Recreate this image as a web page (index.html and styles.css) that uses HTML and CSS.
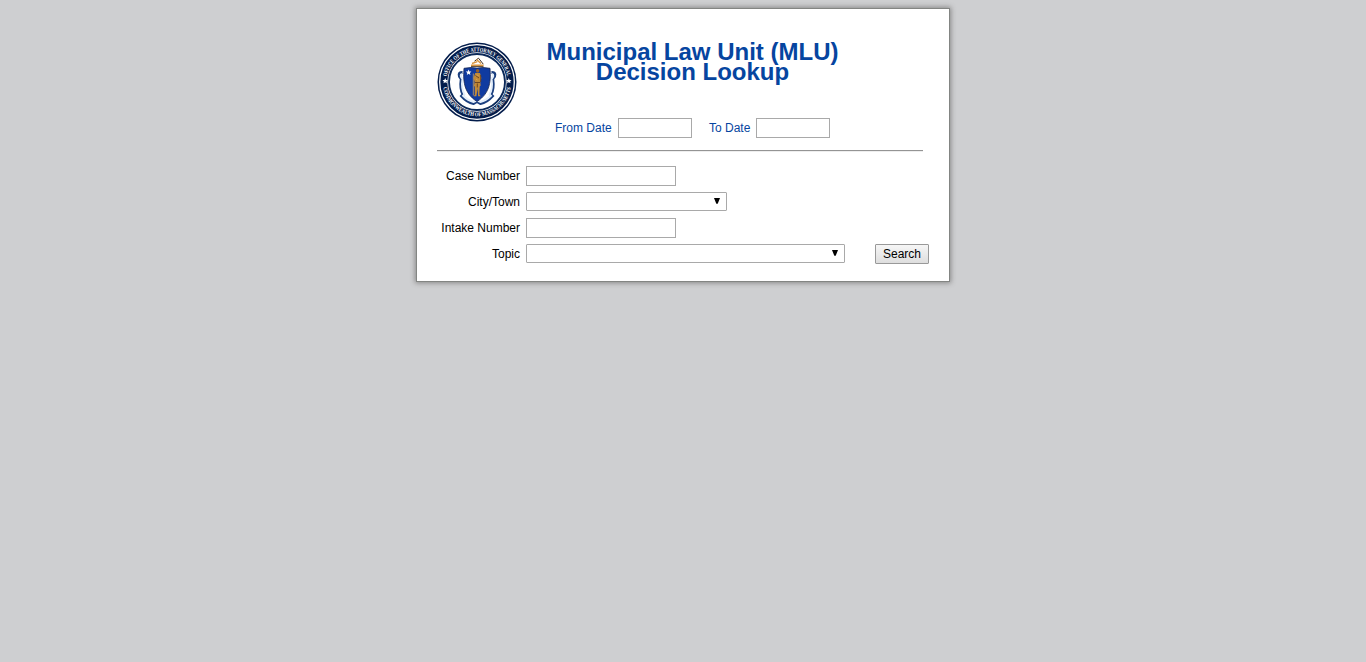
FILE: index.html
```html
<!DOCTYPE html>
<html lang="en">
<head>
<meta charset="utf-8">
<title>Municipal Law Unit Decision Lookup</title>
<link rel="stylesheet" href="styles.css">
</head>
<body>
<main class="card">
  <header class="header">
    <svg class="seal" viewBox="0 0 80 80" role="img" aria-label="Office of the Attorney General seal">
      <defs>
        <path id="arcTop" d="M9.400 40a30.600 30.600 0 0 1 61.200 0"/>
        <path id="arcBottom" d="M5.800 40a34.200 34.200 0 0 0 68.400 0"/>
      </defs>
      <circle cx="40" cy="40" r="39.500" fill="#031c4b"/>
      <circle cx="40" cy="40" r="37.300" fill="none" stroke="#fff" stroke-width="1.300"/>
      <circle cx="40" cy="40" r="29.700" fill="#fff"/>
      <circle cx="40" cy="40" r="28" fill="#fff" stroke="#0b2959" stroke-width="1.900"/>
      <text class="seal-text"><textPath href="#arcTop" startOffset="50%" textLength="85" lengthAdjust="spacingAndGlyphs">OFFICE OF THE ATTORNEY GENERAL</textPath></text>
      <text class="seal-text"><textPath href="#arcBottom" startOffset="50%" textLength="96" lengthAdjust="spacingAndGlyphs">COMMONWEALTH OF MASSACHUSETTS</textPath></text>
      <path fill="#fff" d="M8.200 36.100l.8 1.800 1.900.2-1.400 1.300.4 1.900-1.700-1-1.700 1 .4-1.900-1.400-1.300 1.900-.2zM71.800 36.100l.8 1.800 1.900.2-1.400 1.300.4 1.900-1.700-1-1.700 1 .4-1.900-1.400-1.300 1.900-.2z"/>
      <path d="M34 24.300h12.500M37.500 19.200l4-3 4.800 6" fill="none" stroke="#3d2a18" stroke-width="1"/>
      <path d="M34 23.200h12.500M35 21.500l5.300-1.800M39.500 17.500l4.500 4" fill="none" stroke="#d9953f" stroke-width="1.400"/>
      <path d="M25.500 30.500c-4-.2-4.500 3.200-1.200 6.500-.9 6-.8 11 1.800 15.500l-1.500 1.500c3.500 4 7.500 6.700 12 7.500l3.400-2 3.400 2c4.500-.8 8.500-3.500 12-7.500l-1.500-1.500c2.600-4.500 2.700-9.500 1.800-15.500 3.300-3.300 2.800-6.700-1.200-6.500" fill="none" stroke="#1b3f7f" stroke-width="3"/>
      <path d="M25 32c-2 .5-1.500 3 .4 5-.8 6-.6 11 2 15.300l-1.300 1.500c3.500 3.500 6.500 5.300 10.500 6.200l3.400-1.700 3.400 1.700c4-.9 7-2.700 10.500-6.200l-1.300-1.500c2.600-4.300 2.800-9.300 2-15.300 1.900-2 2.400-4.500.4-5" fill="none" stroke="#e3eefb" stroke-width="2"/>
      <path d="M27 26.300l7-.8 6 .6 6-.6 7 .8c.8 11 1 24.500-13 33.200C26 50.800 26.200 37.300 27 26.300z" fill="#103ba0" stroke="#122352" stroke-width=".8"/>
      <path d="M31.600 27.600l.8 1.800 2 .2-1.500 1.300.5 2-1.800-1.100-1.800 1.100.5-2-1.500-1.300 2-.2z" fill="#fff"/>
      <ellipse cx="40.600" cy="28.800" rx="1.700" ry="1.900" fill="#986027"/>
      <path d="M38.200 31h4.800l1.300 5-1 4.500.4 3-1 1-.3 8.300 1.500 1.500h-2.800l-.5-8-1.200 8h-2.700l1.100-1.500-.1-8-.8-1 .7-3.700-1-4z" fill="#c28a38"/>
      <path d="M38.500 33.500l3.500 2.500M38 40.500h5M40.300 41.500v4M43.700 33v7" fill="none" stroke="#66401f" stroke-width=".9"/>
      <path d="M36.300 31.500v22M39.500 33l2 .5M39 37l1.500 1" fill="none" stroke="#e6ad53" stroke-width=".7"/>
    </svg>
    <div class="heading">
      <h1 class="title">Municipal Law Unit (MLU)<br>Decision Lookup</h1>
      <div class="dates">
        <label class="date-label" for="from">From Date</label><input class="field date-field" id="from" type="text">
        <label class="date-label date-label-to" for="to">To Date</label><input class="field date-field" id="to" type="text">
      </div>
    </div>
  </header>
  <hr class="rule">
  <form class="form">
    <label for="case">Case Number</label><input class="field" id="case" type="text">
    <label for="city">City/Town</label>
    <div class="select select-city" id="city"><svg class="arrow" viewBox="0 0 6 6"><path d="M0 0h6L3.700 5.800H2.300z"/></svg></div>
    <label for="intake">Intake Number</label><input class="field" id="intake" type="text">
    <label for="topic">Topic</label>
    <div class="topic-row">
      <div class="select select-topic" id="topic"><svg class="arrow" viewBox="0 0 6 6"><path d="M0 0h6L3.700 5.800H2.300z"/></svg></div>
      <button class="search" type="button">Search</button>
    </div>
  </form>
</main>
</body>
</html>
```

FILE: styles.css
```css
* { box-sizing: border-box; }

html { background: #cecfd1; }

body {
  min-height: 100vh;
  margin: 0;
  padding-top: 8px;
  color: #000;
  font: 12px/20px "Liberation Sans", Arial, sans-serif;
}

.card {
  width: 534px;
  height: 274px;
  margin: 0 auto;
  padding: 33px 20px 0;
  border: 1px solid #838583;
  background: #fff;
  box-shadow: 0 0 5px 1px #888;
}

.header { display: flex; height: 108px; }
.seal { width: 80px; height: 80px; flex: none; }
.seal-text {
  fill: #fff;
  font: bold 5.8px "Liberation Serif", serif;
  text-anchor: middle;
}

.heading { width: 311px; margin-left: 20px; }
.title {
  margin: 0;
  color: #0645a0;
  font-size: 24px;
  line-height: 20px;
  text-align: center;
  white-space: nowrap;
}
.dates { display: flex; margin: 36px 0 0 18px; }
.date-label { width: 63px; color: #0645a0; }
.date-label-to { width: 47px; margin-left: 17px; }

.field {
  width: 150px;
  height: 20px;
  margin: 0;
  padding: 1px 2px;
  border: 1px solid #a9a9a9;
  background: #fff;
  font: inherit;
}
.date-field { width: 74px; }

.rule {
  width: 486px;
  height: 2px;
  margin: 0;
  border: 0;
  border-top: 1px solid #949494;
  border-bottom: 1px solid #eee;
}

.form {
  display: grid;
  grid-template-columns: 83px 1fr;
  grid-auto-rows: 20px;
  gap: 6px;
  margin-top: 14px;
}
.form > label { text-align: right; }

.select {
  display: flex;
  justify-content: flex-end;
  height: 19px;
  padding: 5px 6px 0 0;
  border: 1px solid #a9a9a9;
  border-radius: 1px;
  background: #fff;
}
.select-city { width: 201px; }
.select-topic { width: 319px; }
.arrow { width: 6px; height: 6px; }

.topic-row { display: flex; gap: 30px; }
.search {
  flex: none;
  width: 54px;
  height: 20px;
  margin: 0;
  padding: 0;
  border: 1px solid #999;
  border-radius: 1px;
  background: linear-gradient(#f6f6f6, #dedede);
  color: #000;
  font: 12px/18px "Liberation Sans", Arial, sans-serif;
}
```
